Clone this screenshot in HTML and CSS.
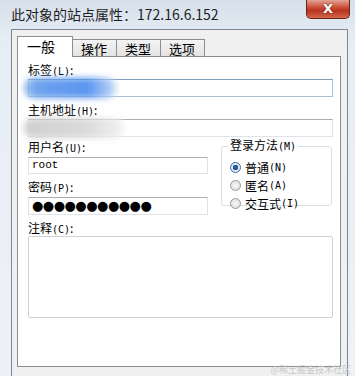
FILE: index.html
```html
<!DOCTYPE html>
<html lang="zh-CN">
<head>
    <meta charset="UTF-8">
    <title>此对象的站点属性</title>
    <link rel="stylesheet" href="styles.css">
</head>
<body>
    <div class="window">
        <!-- Title bar -->
        <div class="titlebar">
            <span class="title">此对象的站点属性：172.16.6.152</span>
            <span class="close">X</span>
        </div>

        <div class="client">
            <!-- Tabs -->
            <div class="tabs">
                <div class="tab active">一般</div>
                <div class="tab">操作</div>
                <div class="tab">类型</div>
                <div class="tab">选项</div>
            </div>

            <div class="panel">
                <div class="label first">标签<span class="key">(L)</span>:</div>
                <div class="field">
                    <input class="text wide blue" type="text">
                    <span class="smudge smudge-blue"></span>
                </div>

                <div class="label">主机地址<span class="key">(H)</span>:</div>
                <div class="field">
                    <input class="text wide" type="text">
                    <span class="smudge smudge-grey"></span>
                </div>

                <div class="columns">
                    <div class="left">
                        <div class="label user">用户名<span class="key">(U)</span>:</div>
                        <div class="text short mono">root</div>
                        <div class="label">密码<span class="key">(P)</span>:</div>
                        <div class="text short pass">●●●●●●●●●●●</div>
                    </div>
                    <fieldset class="group">
                        <legend>登录方法<span class="key">(M)</span></legend>
                        <div class="radio checked"><span class="dot"></span>普通<span class="key">(N)</span></div>
                        <div class="radio"><span class="dot"></span>匿名<span class="key">(A)</span></div>
                        <div class="radio"><span class="dot"></span>交互式<span class="key">(I)</span></div>
                    </fieldset>
                </div>

                <div class="label">注释<span class="key">(C)</span>:</div>
                <div class="notes"></div>
            </div>
        </div>

        <div class="watermark">@稀土掘金技术社区</div>
    </div>
</body>
</html>
```

FILE: styles.css
```css
body {
    margin: 0;
    font-family: "Noto Sans CJK SC", "DejaVu Sans", sans-serif;
    font-size: 12px;
    color: #000;
    background: #eef2f6;
}
.window {
    position: relative;
    height: 376px;
    overflow: hidden;
    background: linear-gradient(#d6e0eb, #e6edf4 40px, #eef2f6);
}
/* Title bar */
.titlebar {
    height: 29px;
    display: flex;
    align-items: flex-start;
    padding-left: 11px;
}
.title {
    font-size: 14px;
    line-height: 28px;
    color: #1e1e1e;
}
.close {
    margin-left: auto;
    margin-right: 5px;
    width: 44px;
    height: 19px;
    box-sizing: border-box;
    border: 1px solid #6b2219;
    border-top: none;
    border-radius: 0 0 5px 5px;
    background: linear-gradient(#e2a393, #c9462f 45%, #b8321e 60%, #d26a4f);
    color: #fff;
    font-family: "DejaVu Sans", sans-serif;
    font-weight: bold;
    font-size: 13px;
    line-height: 17px;
    text-align: center;
    text-shadow: 0 0 2px #5a1a10;
}
/* Dialog client area */
.client {
    margin: 0 7px 0 11px;
    height: 400px;
    border: 1px solid #7b8796;
    border-bottom: none;
    background: #f0f0f0;
    padding: 6px 5px 0 5px;
}
.tabs {
    display: flex;
    align-items: flex-end;
    height: 20px;
}
.tab {
    height: 17px;
    box-sizing: border-box;
    border: 1px solid #8c8e94;
    border-bottom: none;
    border-left: none;
    background: linear-gradient(#f4f4f4, #e3e3e3);
    padding: 0 9px 0 8px;
    line-height: 17px;
    font-size: 13px;
}
.tab.active {
    position: relative;
    z-index: 1;
    height: 21px;
    margin-bottom: -1px;
    border-left: 1px solid #8c8e94;
    background: #fff;
    padding: 0 17px 0 9px;
    line-height: 19px;
    font-size: 14px;
}
.panel {
    width: 324px;
    height: 311px;
    border: 1px solid #898c95;
    background: #fff;
    padding: 0 8px 0 10px;
    box-sizing: border-box;
}
.label {
    height: 14px;
    line-height: 14px;
    margin-top: 6px;
    font-size: 12px;
}
.label.first {
    margin-top: 6px;
}
.key {
    font-family: "DejaVu Sans Mono", monospace;
    font-size: 10px;
}
.field {
    position: relative;
    margin-top: 2px;
}
.text {
    display: block;
    box-sizing: border-box;
    height: 18px;
    margin: 0;
    border: 1px solid #dfe3e8;
    border-top-color: #abadb3;
    background: #fff;
    font: inherit;
}
.text.wide {
    width: 305px;
}
.text.blue {
    border-color: #a8bfd6;
    border-top-color: #7f9db9;
}
.smudge {
    position: absolute;
    top: -1px;
    left: -4px;
    height: 20px;
    border-radius: 9px;
    filter: blur(3px);
}
.smudge-blue {
    width: 92px;
    background: linear-gradient(90deg, #9cc0ee, #6ea2ee 15%, #5b96f0 70%, #c7dcf7);
}
.smudge-grey {
    width: 100px;
    background: linear-gradient(90deg, #d0d0d0, #dadada 60%, #f2f2f2);
}
.columns {
    display: flex;
    align-items: flex-start;
}
.left {
    width: 180px;
}
.label.user {
    margin-top: 3px;
}
.text.short {
    width: 180px;
    margin-top: 3px;
}
.mono {
    height: 17px;
    font-family: "Liberation Mono", monospace;
    font-size: 11px;
    line-height: 15px;
    padding-left: 3px;
}
.pass {
    margin-top: 2px;
    font-family: "DejaVu Sans", sans-serif;
    font-size: 13px;
    line-height: 16px;
    letter-spacing: -0.5px;
    padding-left: 3px;
}
/* Login method group */
.group {
    margin: 1px 0 0 13px;
    padding: 4px 0 0 8px;
    width: 112px;
    height: 68px;
    box-sizing: border-box;
    border: 1px solid #d5dfe5;
    border-radius: 3px;
}
.group legend {
    padding: 0 2px;
    margin-left: -2px;
    line-height: 14px;
}
.radio {
    display: flex;
    align-items: center;
    height: 18px;
}
.dot {
    width: 11px;
    height: 11px;
    border-radius: 50%;
    border: 1px solid #9a9a9a;
    background: radial-gradient(#f8f8f8, #d8d8d8);
    margin-right: 4px;
    box-sizing: border-box;
}
.radio.checked .dot {
    border-color: #3c6fa3;
    background: radial-gradient(#2d6fb5 0, #1b4f8c 2.5px, #e8eef4 3px, #cfd8e0);
}
.notes {
    margin-top: 1px;
    width: 305px;
    height: 82px;
    box-sizing: border-box;
    border: 1px solid #d0d0d0;
    border-radius: 2px;
}
.watermark {
    position: absolute;
    right: 4px;
    bottom: 0;
    font-size: 9px;
    color: #c8c8c8;
}
```
